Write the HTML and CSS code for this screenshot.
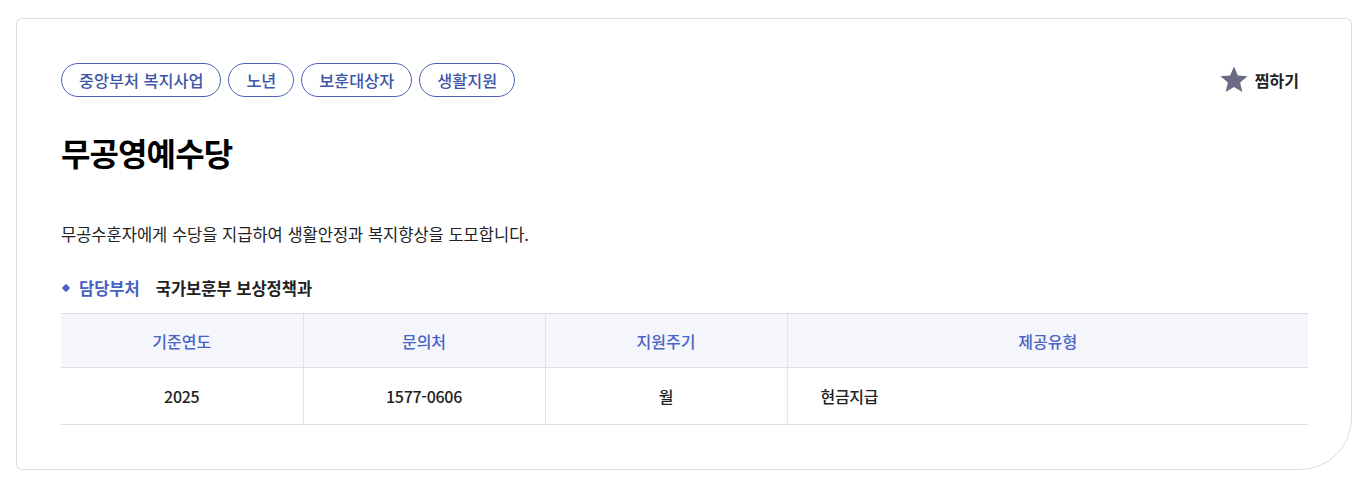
FILE: index.html
```html
<!DOCTYPE html>
<html lang="ko">
<head>
<meta charset="utf-8">
<title>무공영예수당</title>
<link rel="stylesheet" href="styles.css">
</head>
<body>
<div class="page">
  <section class="card">
    <div class="top">
      <ul class="tags">
        <li class="tag">중앙부처 복지사업</li>
        <li class="tag">노년</li>
        <li class="tag">보훈대상자</li>
        <li class="tag">생활지원</li>
      </ul>
      <button class="fav" type="button">
        <svg class="star" width="30" height="30" viewBox="0 0 24 24" aria-hidden="true"><path d="M12 1.2l3.1 7.1 7.7.6-5.9 5.1 1.8 7.6L12 17.5l-6.7 4.1 1.8-7.6L1.2 8.9l7.7-.6z" fill="#6b6b86"/></svg>
        <span>찜하기</span>
      </button>
    </div>
    <h1 class="title">무공영예수당</h1>
    <p class="desc">무공수훈자에게 수당을 지급하여 생활안정과 복지향상을 도모합니다.</p>
    <div class="dept">
      <span class="dot"></span>
      <span class="dept-label">담당부처</span>
      <span class="dept-value">국가보훈부 보상정책과</span>
    </div>
    <table class="info">
      <thead>
        <tr>
          <th class="c1">기준연도</th>
          <th class="c2">문의처</th>
          <th class="c3">지원주기</th>
          <th class="c4">제공유형</th>
        </tr>
      </thead>
      <tbody>
        <tr>
          <td>2025</td>
          <td>1577-0606</td>
          <td>월</td>
          <td class="left">현금지급</td>
        </tr>
      </tbody>
    </table>
  </section>
</div>
</body>
</html>
```

FILE: styles.css
```css
* { box-sizing: border-box; }
html, body { margin: 0; padding: 0; background: #fff; }
body {
  font-family: "Noto Sans CJK KR", "Noto Sans", sans-serif;
  color: #222;
}
.page {
  padding: 18px 14px 12px 16px;
}
.card {
  width: 1336px;
  height: 452px;
  border: 1px solid #dcdcdc;
  border-radius: 6px 6px 52px 6px;
  padding: 44px 44px 0 44px;
  background: #fff;
}
.top {
  display: flex;
  justify-content: space-between;
  align-items: center;
  height: 34px;
}
.tags {
  display: flex;
  gap: 7px;
  list-style: none;
  margin: 0;
  padding: 0;
}
.tag {
  height: 34px;
  line-height: 32px;
  padding: 0 17px;
  border: 1px solid #4a63b5;
  border-radius: 17px;
  color: #3d56a8;
  font-size: 16.3px;
  font-weight: 500;
}
.fav {
  display: flex;
  align-items: center;
  gap: 6px;
  background: none;
  border: 0;
  padding: 0;
  margin-right: 8px;
  font-family: inherit;
  font-size: 16px;
  font-weight: 700;
  color: #222;
}
.star { display: block; }
.title {
  margin: 35px 0 0;
  font-size: 32px;
  line-height: 40px;
  font-weight: 700;
  color: #000;
  letter-spacing: -0.9px;
}
.desc {
  margin: 50px 0 0;
  font-size: 16.5px;
  line-height: 24px;
  color: #222;
}
.dept {
  display: flex;
  align-items: center;
  margin-top: 30px;
  height: 24px;
  font-size: 16.5px;
  font-weight: 700;
}
.dot {
  width: 6px;
  height: 6px;
  background: #4a63c4;
  transform: rotate(45deg);
  border-radius: 1px;
  margin: 0 10px 0 2px;
}
.dept-label { color: #4760c4; margin-right: 16px; }
.dept-value { color: #222; }
.info {
  margin-top: 13px;
  width: 1247px;
  border-collapse: collapse;
  table-layout: fixed;
}
.info th {
  height: 54px;
  background: #f4f6fb;
  color: #4a63c4;
  font-size: 16px;
  font-weight: 500;
  border-top: 1px solid #dedede;
  border-bottom: 1px solid #dedede;
  border-left: 1px solid #e2e2e2;
}
.info th:first-child, .info td:first-child { border-left: 0; }
.info .c1, .info .c2, .info .c3 { width: 242px; }
.info td {
  height: 57px;
  text-align: center;
  font-size: 16px;
  font-weight: 500;
  color: #222;
  border-bottom: 1px solid #dedede;
  border-left: 1px solid #e6e6e6;
  letter-spacing: -0.3px;
}
.info td.left { text-align: left; padding-left: 33px; }
```
